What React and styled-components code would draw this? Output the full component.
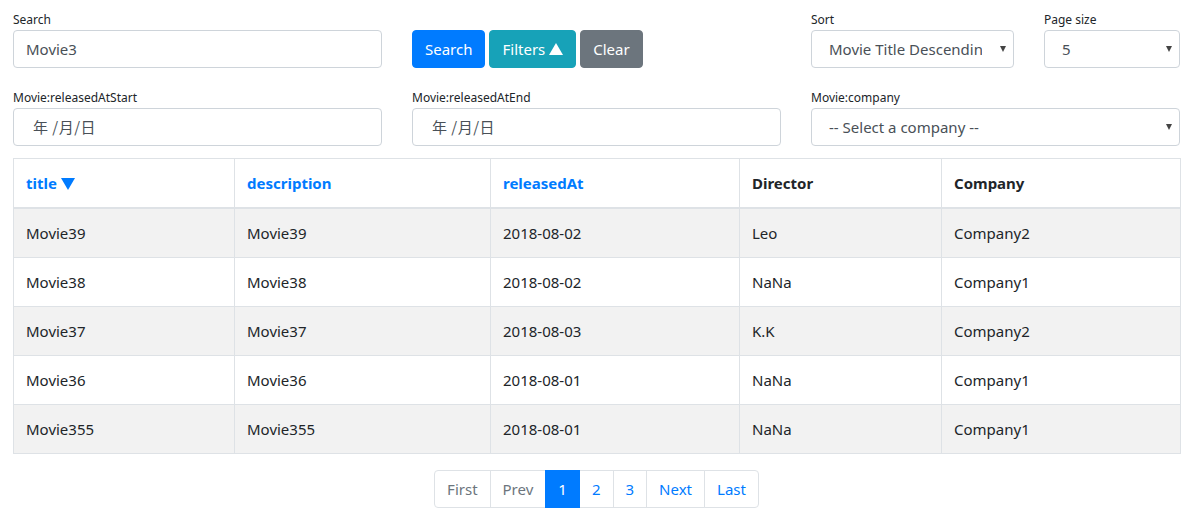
import React from "react";
import styled, { createGlobalStyle } from "styled-components";

const Global = createGlobalStyle`
  html, body { margin: 0; padding: 0; background: #fff; }
  body {
    font-family: "Noto Sans", "Noto Sans CJK SC", sans-serif;
    font-size: 15px;
    line-height: 24px;
    color: #212529;
  }
  * { box-sizing: border-box; }
`;

const Page = styled.div`
  padding: 10px 10px 0 13px;
  width: 1190px;
`;

const FormRow = styled.div`
  display: grid;
  grid-template-columns: repeat(3, 369px);
  column-gap: 30px;
  margin-bottom: ${(p) => p.$mb || 0}px;
`;

const SubRow = styled.div`
  display: grid;
  grid-template-columns: 203px 136px;
  column-gap: 30px;
`;

const Group = styled.div`
  display: flex;
  flex-direction: column;
`;

const Label = styled.label`
  display: block;
  font-size: 12px;
  line-height: 20px;
  height: 20px;
  color: #212529;
  white-space: nowrap;
`;

const fieldBase = `
  height: 38px;
  width: 100%;
  border: 1px solid #ced4da;
  border-radius: 4px;
  background: #fff;
  color: #495057;
  font-family: "Noto Sans", "Noto Sans CJK SC", sans-serif;
  font-size: 15px;
  line-height: 24px;
`;

const TextInput = styled.input`
  ${fieldBase}
  padding: 6px 12px;
  outline: none;
`;

const DateField = styled.div`
  ${fieldBase}
  padding: 6px 12px 6px 19px;
  display: flex;
  align-items: center;
  font-family: "Noto Sans CJK SC", "Noto Sans", sans-serif;
  font-size: 15px;
  letter-spacing: 0.5px;
`;

const SelectWrap = styled.div`
  position: relative;
  width: 100%;
`;

const Select = styled.div`
  ${fieldBase}
  padding: 6px 28px 6px 17px;
  display: flex;
  align-items: center;
  white-space: nowrap;
  overflow: hidden;
`;

const Clip = styled.span`
  display: block;
  overflow: hidden;
  white-space: nowrap;
  max-width: ${(p) => p.$w || 1000}px;
`;

const Caret = styled.span`
  position: absolute;
  right: 8px;
  top: 16px;
  width: 0;
  height: 0;
  border-left: 3.5px solid transparent;
  border-right: 3.5px solid transparent;
  border-top: 6px solid #444;
`;

const Buttons = styled.div`
  display: flex;
  gap: 4px;
`;

const Button = styled.button`
  height: 38px;
  padding: 6px 12px;
  border: 1px solid ${(p) => p.$bg};
  background: ${(p) => p.$bg};
  color: #fff;
  border-radius: 4px;
  font-family: "Noto Sans", sans-serif;
  font-size: 15px;
  line-height: 24px;
  white-space: nowrap;
  display: flex;
  align-items: center;
  gap: 4px;
`;

const UpTri = styled.span`
  width: 0;
  height: 0;
  border-left: 7px solid transparent;
  border-right: 7px solid transparent;
  border-bottom: 12px solid #fff;
  margin-top: -1px;
`;

const DownTri = styled.span`
  display: inline-block;
  width: 0;
  height: 0;
  border-left: 7px solid transparent;
  border-right: 7px solid transparent;
  border-top: 12px solid #007bff;
  margin-left: 4px;
  vertical-align: -1px;
`;

const Table = styled.table`
  width: 1167px;
  border-collapse: collapse;
  margin-top: 12px;
  table-layout: fixed;
`;

const Th = styled.th`
  text-align: left;
  padding: 12px 12px 11px;
  font-weight: 700;
  font-size: 15px;
  line-height: 24px;
  height: 49px;
  color: ${(p) => (p.$link ? "#007bff" : "#212529")};
  border: 1px solid #dee2e6;
  border-bottom: 2px solid #dee2e6;
`;

const Tr = styled.tr`
  background: ${(p) => (p.$odd ? "#f2f2f2" : "#fff")};
`;

const Td = styled.td`
  padding: 12px;
  height: 49px;
  border: 1px solid #dee2e6;
  font-size: 15px;
  line-height: 24px;
`;

const PagerWrap = styled.div`
  display: flex;
  justify-content: center;
  margin-top: 16px;
`;

const Pager = styled.ul`
  display: flex;
  list-style: none;
  margin: 0;
  padding: 0;
`;

const PageLink = styled.li`
  height: 38px;
  padding: 8px 12px;
  border: 1px solid ${(p) => (p.$active ? "#007bff" : "#dee2e6")};
  margin-left: ${(p) => (p.$first ? 0 : -1)}px;
  background: ${(p) => (p.$active ? "#007bff" : "#fff")};
  color: ${(p) => (p.$active ? "#fff" : p.$disabled ? "#6c757d" : "#007bff")};
  font-size: 15px;
  line-height: 20px;
  position: relative;
  z-index: ${(p) => (p.$active ? 1 : 0)};
  border-radius: ${(p) => (p.$first ? "4px 0 0 4px" : p.$last ? "0 4px 4px 0" : "0")};
`;

const rows = [
  ["Movie39", "Movie39", "2018-08-02", "Leo", "Company2"],
  ["Movie38", "Movie38", "2018-08-02", "NaNa", "Company1"],
  ["Movie37", "Movie37", "2018-08-03", "K.K", "Company2"],
  ["Movie36", "Movie36", "2018-08-01", "NaNa", "Company1"],
  ["Movie355", "Movie355", "2018-08-01", "NaNa", "Company1"],
];

const widths = [221, 256, 249, 202, 239];

const pages = [
  { t: "First", disabled: true },
  { t: "Prev", disabled: true },
  { t: "1", active: true },
  { t: "2" },
  { t: "3" },
  { t: "Next" },
  { t: "Last" },
];

export default function App() {
  return (
    <Page>
      <Global />
      <FormRow $mb={20}>
        <Group>
          <Label>Search</Label>
          <TextInput defaultValue="Movie3" />
        </Group>
        <Group>
          <Label />
          <Buttons>
            <Button $bg="#007bff">Search</Button>
            <Button $bg="#17a2b8">
              Filters <UpTri />
            </Button>
            <Button $bg="#6c757d">Clear</Button>
          </Buttons>
        </Group>
        <SubRow>
          <Group>
            <Label>Sort</Label>
            <SelectWrap>
              <Select>
                <Clip $w={153}>Movie Title Descending</Clip>
              </Select>
              <Caret />
            </SelectWrap>
          </Group>
          <Group>
            <Label>Page size</Label>
            <SelectWrap>
              <Select>5</Select>
              <Caret />
            </SelectWrap>
          </Group>
        </SubRow>
      </FormRow>
      <FormRow>
        <Group>
          <Label>Movie:releasedAtStart</Label>
          <DateField>年 /月/日</DateField>
        </Group>
        <Group>
          <Label>Movie:releasedAtEnd</Label>
          <DateField>年 /月/日</DateField>
        </Group>
        <Group>
          <Label>Movie:company</Label>
          <SelectWrap>
            <Select>-- Select a company --</Select>
            <Caret />
          </SelectWrap>
        </Group>
      </FormRow>
      <Table>
        <colgroup>
          {widths.map((w, i) => (
            <col key={i} style={{ width: w }} />
          ))}
        </colgroup>
        <thead>
          <tr>
            <Th $link>
              title<DownTri />
            </Th>
            <Th $link>description</Th>
            <Th $link>releasedAt</Th>
            <Th>Director</Th>
            <Th>Company</Th>
          </tr>
        </thead>
        <tbody>
          {rows.map((r, i) => (
            <Tr key={i} $odd={i % 2 === 0}>
              {r.map((c, j) => (
                <Td key={j}>{c}</Td>
              ))}
            </Tr>
          ))}
        </tbody>
      </Table>
      <PagerWrap>
        <Pager>
          {pages.map((p, i) => (
            <PageLink
              key={p.t}
              $first={i === 0}
              $last={i === pages.length - 1}
              $active={p.active}
              $disabled={p.disabled}
            >
              {p.t}
            </PageLink>
          ))}
        </Pager>
      </PagerWrap>
    </Page>
  );
}
